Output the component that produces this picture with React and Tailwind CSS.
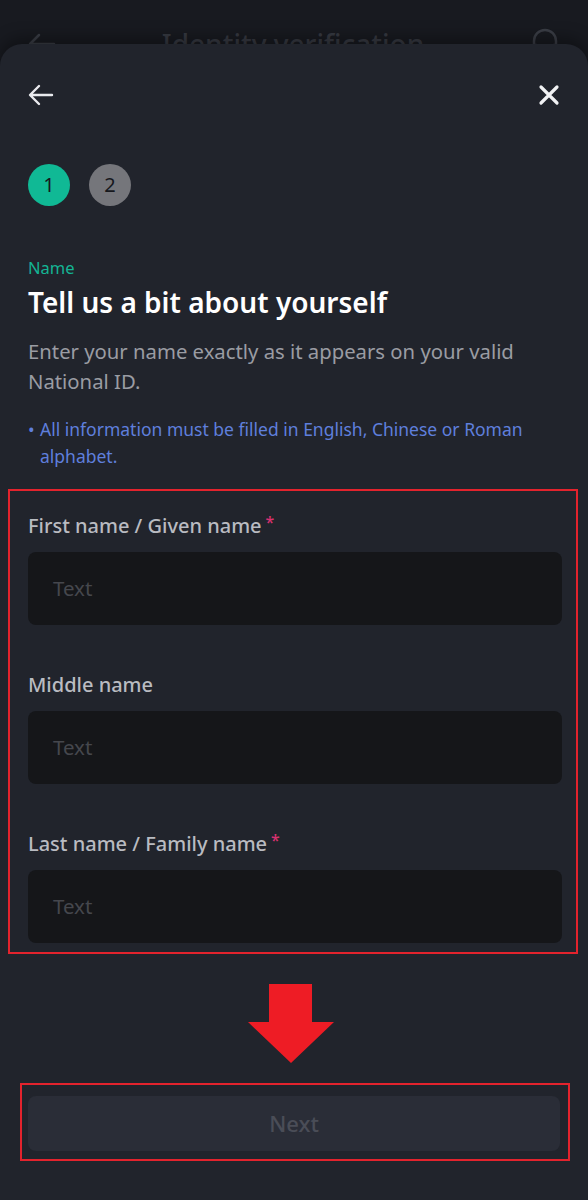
import React from "react";

const font = { fontFamily: "'Noto Sans', Roboto, sans-serif" };

function Field({ label, required }) {
  return (
    <div className="flex flex-col">
      <div className="h-[26px] flex items-center text-[20px] font-medium text-[#b9bbc1]">
        {label}
        {required && <span className="text-[#d8316f] text-[16px] ml-[4px] -mt-[8px]">*</span>}
      </div>
      <div className="mt-[13px] h-[73px] rounded-[8px] bg-[#151619] flex items-center pl-[25px] text-[20.5px] text-[#45474d]">
        Text
      </div>
    </div>
  );
}

export default function App() {
  return (
    <div className="w-[588px] h-[1200px] bg-[#181a20] overflow-hidden flex flex-col" style={font}>
      <div className="h-[88px] shrink-0 relative flex items-center justify-between px-[28px] text-[#3a3d45]">
        <svg width="28" height="22" viewBox="0 0 28 22" fill="none" stroke="currentColor" strokeWidth="2.5" strokeLinecap="round" strokeLinejoin="round">
          <path d="M26 11H3M11 2L2 11l9 9" />
        </svg>
        <div className="text-[28px] font-medium text-[#363941]">Identity verification</div>
        <svg width="30" height="34" viewBox="0 0 30 34" fill="none" stroke="currentColor" strokeWidth="2.5">
          <path d="M4 20v-6a11 11 0 0 1 22 0v6" />
          <rect x="2" y="18" width="6" height="12" rx="2" />
          <rect x="22" y="18" width="6" height="12" rx="2" />
        </svg>
      </div>
      <div className="-mt-[44px] relative z-10 flex-1 bg-[#21242c] rounded-t-[22px] shadow-[0_-6px_16px_rgba(0,0,0,0.35)] px-[28px] flex flex-col">
        <div className="h-[102px] flex items-center justify-between">
          <svg width="26" height="22" viewBox="0 0 26 22" fill="none" stroke="#e9eaee" strokeWidth="2.4" strokeLinecap="round" strokeLinejoin="round">
            <path d="M24 11H3M11 2L2 11l9 9" />
          </svg>
          <svg width="22" height="22" viewBox="0 0 22 22" fill="none" stroke="#f1f2f4" strokeWidth="3.2" strokeLinecap="round">
            <path d="M3 3l16 16M19 3L3 19" />
          </svg>
        </div>
        <div className="flex gap-[19px] mt-[18px]">
          <div className="w-[42px] h-[42px] rounded-full bg-[#10b995] flex items-center justify-center text-[20px] text-[#16181d]">1</div>
          <div className="w-[42px] h-[42px] rounded-full bg-[#75767b] flex items-center justify-center text-[20px] text-[#16181d]">2</div>
        </div>
        <div className="mt-[51px] h-[22px] flex items-center text-[16.5px] text-[#14b594]">Name</div>
        <div className="mt-0 h-[46px] flex items-center text-[28px] font-semibold text-white">Tell us a bit about yourself</div>
        <div className="mt-[11px] text-[20.3px] leading-[30px] text-[#9a9ca3]">
          Enter your name exactly as it appears on your valid National ID.
        </div>
        <div className="mt-[20px] flex text-[17.5px] leading-[27px] text-[#5f7fdc]">
          <span className="w-[12px] shrink-0">•</span>
          <span>All information must be filled in English, Chinese or Roman alphabet.</span>
        </div>
        <div className="mt-[19px] -ml-[20px] -mr-[18px] border-2 border-[#e3232d] pl-[18px] pr-[14px] pt-[22px] pb-[9px] flex flex-col gap-[47px]">
          <Field label="First name / Given name" required />
          <Field label="Middle name" />
          <Field label="Last name / Family name" required />
        </div>
        <div className="mt-[30px] flex justify-center">
          <svg width="88" height="80" viewBox="0 0 88 80" className="ml-[-6px]">
            <path d="M22 0h43v38h22L44 79 1 38h21z" fill="#ee1c25" />
          </svg>
        </div>
        <div className="mt-[19px] -ml-[8px] -mr-[10px] border-2 border-[#e3232d] pl-[6px] pr-[8px] pt-[11px] pb-[8px]">
          <div className="h-[55px] rounded-[8px] bg-[#2a2d37] flex items-center justify-center text-[22px] font-medium text-[#4a4d57]">Next</div>
        </div>
      </div>
    </div>
  );
}
